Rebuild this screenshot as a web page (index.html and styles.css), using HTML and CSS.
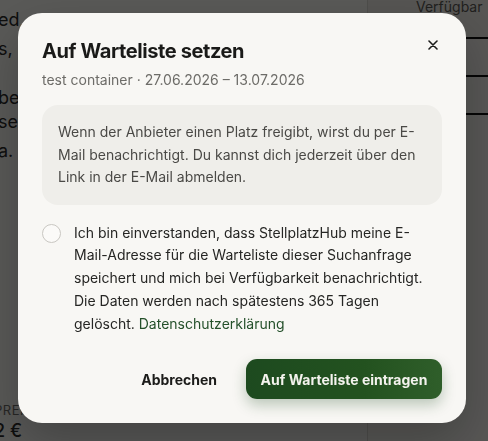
FILE: index.html
```html
<!DOCTYPE html>
<html lang="de">
<head>
<meta charset="utf-8">
<title>Auf Warteliste setzen</title>
<link rel="stylesheet" href="styles.css">
</head>
<body>
<div class="page">
  <div class="page-main">
    <p class="bg-line l1">ed, </p>
    <p class="bg-line l2">s, e</p>
    <p class="bg-line l3">bell</p>
    <p class="bg-line l4">sec</p>
    <p class="bg-line l5">a.</p>
    <div class="bg-price">
      <span class="bg-label">PREIS</span>
      <span class="bg-amount">2 €</span>
    </div>
  </div>
  <aside class="page-side">
    <div class="side-head">Verfügbar ab</div>
    <div class="side-row"></div>
    <div class="side-row"></div>
  </aside>
</div>

<div class="overlay">
  <div class="modal" role="dialog" aria-labelledby="modal-title">
    <button class="close" aria-label="Schließen">
      <svg width="10" height="10" viewBox="0 0 10 10"><path d="M1 1L9 9M9 1L1 9" stroke="#1c1c1a" stroke-width="1.6" stroke-linecap="round"/></svg>
    </button>
    <h2 id="modal-title" class="title">Auf Warteliste setzen</h2>
    <p class="subtitle">test container · 27.06.2026 – 13.07.2026</p>
    <div class="info">Wenn der Anbieter einen Platz freigibt, wirst du per E-Mail benachrichtigt. Du kannst dich jederzeit über den Link in der E-Mail abmelden.</div>
    <label class="consent">
      <span class="check"></span>
      <span class="consent-text">Ich bin einverstanden, dass StellplatzHub meine E-Mail-Adresse für die Warteliste dieser Suchanfrage speichert und mich bei Verfügbarkeit benachrichtigt. Die Daten werden nach spätestens 365 Tagen gelöscht. <a class="link" href="#">Datenschutzerklärung</a></span>
    </label>
    <div class="actions">
      <button class="btn btn-ghost">Abbrechen</button>
      <button class="btn btn-primary">Auf Warteliste eintragen</button>
    </div>
  </div>
</div>
</body>
</html>
```

FILE: styles.css
```css
* { box-sizing: border-box; }

html, body {
  margin: 0;
  padding: 0;
  width: 488px;
  height: 441px;
  overflow: hidden;
}

body {
  font-family: Inter, "Noto Sans", "Liberation Sans", sans-serif;
  background: #f6f5f1;
  color: #1c1c1a;
}

.page {
  display: flex;
  height: 441px;
}

.page-main {
  flex: 1;
  position: relative;
  font-size: 18px;
  color: #2a2a28;
}

.bg-line {
  margin: 0;
  position: absolute;
  left: -2px;
  line-height: 24px;
}
.l1 { top: 8px; }
.l2 { top: 37px; }
.l3 { top: 86px; }
.l4 { top: 110px; }
.l5 { top: 139px; }

.bg-price {
  position: absolute;
  left: -6px;
  top: 402px;
  display: flex;
  flex-direction: column;
}
.bg-label {
  font-size: 13px;
  letter-spacing: 0.5px;
  color: #6b6a66;
}
.bg-amount {
  font-size: 18px;
  font-weight: 500;
  margin-top: 2px;
}

.page-side {
  width: 121px;
  border-left: 1px solid #d8d6d0;
  background: #f3f1ec;
}
.side-head {
  height: 39px;
  padding: 0 0 0 48px;
  font-size: 14px;
  line-height: 14px;
  color: #5a5955;
  background: #eeece6;
  border-bottom: 2px solid #111;
}
.side-row {
  height: 38px;
  border-bottom: 2px solid #111;
}

.overlay {
  position: fixed;
  inset: 0;
  background: rgba(0, 0, 0, 0.64);
  display: flex;
  align-items: flex-start;
  padding: 13px 0 0 18px;
}

.modal {
  position: relative;
  width: 448px;
  height: 410px;
  background: #f8f7f4;
  border-radius: 24px;
  padding: 25px 24px 24px;
  box-shadow: 0 20px 50px rgba(0, 0, 0, 0.25);
}

.close {
  position: absolute;
  top: 21px;
  right: 22px;
  width: 22px;
  height: 22px;
  border: 0;
  padding: 0;
  background: none;
  display: flex;
  align-items: center;
  justify-content: center;
}

.title {
  margin: 0;
  font-size: 20px;
  line-height: 26px;
  font-weight: 700;
  letter-spacing: -0.4px;
  color: #1a1a18;
}

.subtitle {
  margin: 6px 0 0;
  font-size: 14px;
  line-height: 20px;
  color: #6d6c68;
}

.info {
  margin-top: 15px;
  background: #efeeea;
  border-radius: 16px;
  padding: 16px 16px;
  font-size: 14px;
  line-height: 22.5px;
  color: #4a4946;
}

.consent {
  margin-top: 17px;
  display: flex;
  gap: 13px;
  align-items: flex-start;
}

.check {
  flex: none;
  width: 19px;
  height: 19px;
  border: 1px solid #c9c7c2;
  border-radius: 50%;
  background: #fbfaf8;
  margin-top: 2px;
}

.consent-text {
  font-size: 14px;
  line-height: 22.75px;
  color: #262624;
}

.link {
  color: #24502a;
  text-decoration: none;
}

.actions {
  margin-top: 24px;
  display: flex;
  justify-content: flex-end;
  align-items: center;
  gap: 13px;
}

.btn {
  font-family: inherit;
  font-size: 14px;
  font-weight: 700;
  height: 40px;
  border: 0;
  border-radius: 11px;
  cursor: pointer;
}

.btn-ghost {
  background: none;
  color: #1c1c1a;
  padding: 0 16px;
}

.btn-primary {
  width: 196px;
  color: #f4f3ee;
  background: linear-gradient(90deg, #1d4a1f 0%, #23521f 60%, #2f5e2a 100%);
  box-shadow: 0 6px 14px rgba(30, 74, 31, 0.28);
}
```
